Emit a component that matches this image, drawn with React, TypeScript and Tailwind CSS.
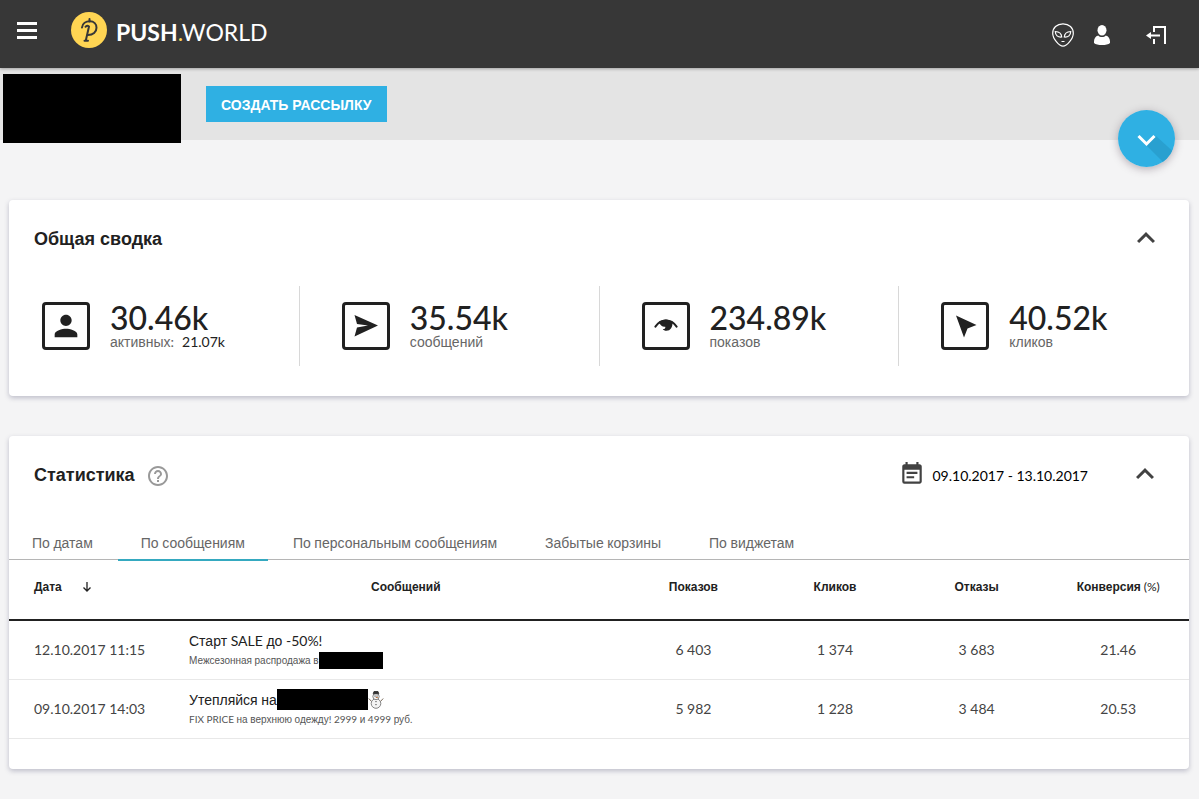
import { useState } from 'react';
import type { ReactNode } from 'react';
import { MdEventNote, MdHelpOutline, MdKeyboardArrowUp, MdPerson } from 'react-icons/md';

// Cyrillic is set in Liberation Sans, digits and latin stay in Lato
const Txt = ({ children }: { children: string }) => (
  <span>
    {children.split(/([\u0400-\u04FF]+)/).map((part, i) =>
      i % 2 ? <span key={i} className="font-['Liberation_Sans',sans-serif]">{part}</span> : part
    )}
  </span>
);

const Logo = () => (
  <a href="#" className="flex items-center gap-[9px]">
    <svg width="36" height="36" viewBox="0 0 36 36" fill="none" stroke="#373737" strokeWidth="2" strokeLinecap="round">
      <circle cx="18" cy="18" r="18" fill="#ffd553" stroke="none" />
      <path d="M18.5 7v2.5" />
      <path d="M11 15.500c.5-4 4-6.200 7.800-6.200 4.200 0 6.700 3 6.700 6.500 0 4.200-3.500 7.200-8.500 7.200" />
      <path d="M14.500 14.800c1-1.400 2.200-1.400 3.500-.3M18 14.500L14.800 28.500M13.500 28.800h3.500" />
    </svg>
    <span className="pt-1 text-[23px] leading-8 text-white">
      <span className="font-bold">PUSH</span>
      <span className="text-[#ffd553]">.</span>
      <span>WORLD</span>
    </span>
  </a>
);

const AlienIcon = () => (
  <svg width="22" height="24" viewBox="0 0 22 24" fill="none" stroke="#fff" strokeWidth="1.2">
    <path d="M11 .8C4.800.8.7 4.800.7 10.200c0 5.300 6.300 13 10.300 13s10.300-7.700 10.300-13C21.300 4.800 17.200.8 11 .8z" />
    <path d="M3.300 8.500c4 .2 6.200 2 6.400 5.500-3.900.3-6.400-1.500-6.400-5.500zM18.700 8.500c-4 .2-6.200 2-6.400 5.500 3.900.3 6.400-1.500 6.400-5.500zM9.500 18.500h3" />
  </svg>
);

const UserIcon = () => (
  <svg width="16" height="20" viewBox="0 0 16 20" fill="#fff">
    <ellipse cx="8" cy="5.300" rx="4.500" ry="5.300" />
    <path d="M4.200 10.500C5.200 11.600 6.500 12 8 12s2.800-.4 3.800-1.500C14.500 11.300 16 13.500 16 16.500V18c-1.500 1.400-4.500 2-8 2s-6.500-.6-8-2v-1.500c0-3 1.500-5.200 4.200-6z" />
  </svg>
);

const ExitIcon = () => (
  <svg width="20" height="20" viewBox="0 0 20 20" fill="none" stroke="#fff" strokeWidth="2">
    <path d="M8 7V2h11v17M8 14v5M3 10.500h11" />
    <path d="M5 7L0 10.500 5 14z" fill="#fff" stroke="none" />
  </svg>
);

const SendIcon = () => (
  <svg width="24" height="24" viewBox="0 0 24 24" fill="currentColor"><path d="M.5 1L24 11.500.5 22.500 3 13.500l11-2L3 10z" /></svg>
);

const EyeIcon = () => (
  <svg width="24" height="24" viewBox="0 0 24 24" fill="none" stroke="currentColor">
    <path d="M1.500 12.500C7 4.500 17 4.500 22.500 12.500" strokeWidth="2.200" strokeLinecap="round" />
    <path d="M5 8C8.500 4.500 15 4.500 18.500 8 18.800 13 16.500 16.800 12.500 16.800c-1.800 0-3.100-.7-3.700-1.800 1.700.2 2.800-.7 2.500-2.300C8.800 13.200 6 11.500 5 8z" fill="currentColor" stroke="none" />
  </svg>
);

const CursorIcon = () => (
  <svg width="24" height="24" viewBox="0 0 24 24" fill="currentColor"><path d="M3 1.500L23.500 11l-9 3.500-3.500 9z" /></svg>
);

const Snowman = () => (
  <svg width="16" height="18" viewBox="0 0 16 18" fill="#f4f4f4" stroke="#777" strokeWidth=".9">
    <path d="M4 11L.8 7.500M12 11l3.200-3.500" stroke="#6b5a4a" />
    <circle cx="8" cy="12.500" r="4.800" />
    <circle cx="8" cy="5.500" r="3.200" />
    <path d="M5.200 2.800L6 .5h4l.8 2.300z" fill="#333" stroke="#333" />
    <path d="M7 5h.1M9 5h.1M8 10.500v.1M8 13.500v.1" stroke="#222" strokeWidth="1.200" strokeLinecap="round" />
    <path d="M7.800 6.500h2" stroke="#c06a2c" />
  </svg>
);

const summary: { value: string; label: string; extra?: string; icon: ReactNode }[] = [
  { value: '30.46k', label: 'активных:', extra: '21.07k', icon: <MdPerson size={34} /> },
  { value: '35.54k', label: 'сообщений', icon: <SendIcon /> },
  { value: '234.89k', label: 'показов', icon: <EyeIcon /> },
  { value: '40.52k', label: 'кликов', icon: <CursorIcon /> },
];

const tabs = ['По датам', 'По сообщениям', 'По персональным сообщениям', 'Забытые корзины', 'По виджетам'];

const rows = [
  {
    date: '12.10.2017 11:15',
    title: <Txt>Старт SALE до -50%!</Txt>,
    text: <><Txt>Межсезонная распродажа в</Txt><span className="h-[17px] w-16 bg-black" /></>,
    values: ['6 403', '1 374', '3 683', '21.46'],
  },
  {
    date: '09.10.2017 14:03',
    title: <><Txt>Утепляйся на</Txt><span className="h-[21px] w-[91px] bg-black" /><Snowman /></>,
    text: <Txt>FIX PRICE на верхнюю одежду! 2999 и 4999 руб.</Txt>,
    values: ['5 982', '1 228', '3 484', '20.53'],
  },
];

const Collapse = ({ open, onClick }: { open: boolean; onClick: () => void }) => (
  <button onClick={onClick} aria-label="Свернуть" className={open ? 'text-[#424242]' : 'rotate-180 text-[#424242]'}>
    <MdKeyboardArrowUp size={36} />
  </button>
);

export default function App() {
  const [tab, setTab] = useState(1);
  const [summaryOpen, setSummaryOpen] = useState(true);
  const [statsOpen, setStatsOpen] = useState(true);

  return (
    <div className="min-h-screen bg-[#f4f4f5] pb-7 font-['Lato','Liberation_Sans',sans-serif] text-sm text-[#212121]">
      <header className="relative z-10 flex h-17 items-start justify-between bg-[#373737] pr-[33px] pl-[17px] shadow-[0_1px_3px_rgba(0,0,0,0.3)]">
        <div className="flex items-center gap-[34px] pt-3">
          <button aria-label="Меню" className="flex w-5 flex-col gap-1">
            <span className="h-[3px] bg-white" />
            <span className="h-[3px] bg-white" />
            <span className="h-[3px] bg-white" />
          </button>
          <Logo />
        </div>
        <div className="flex items-center pt-[23px]">
          <button aria-label="Поддержка"><AlienIcon /></button>
          <button aria-label="Профиль" className="ml-5"><UserIcon /></button>
          <button aria-label="Выход" className="ml-9"><ExitIcon /></button>
        </div>
      </header>

      <div className="relative flex h-18 items-start bg-[#e4e4e4] pt-1.5 pl-[3px]">
        <div className="h-[69px] w-[178px] bg-black" />
        <button className="mt-3 ml-[25px] h-9 bg-[#2fb0e3] px-[15px] pt-0.5 font-['Liberation_Sans',sans-serif] text-sm font-bold text-white">
          СОЗДАТЬ РАССЫЛКУ
        </button>
        <button aria-label="Развернуть" className="absolute right-6 -bottom-[27px] rounded-full shadow-[0_2px_8px_rgba(60,40,60,0.35)]">
          <svg width="57" height="57" viewBox="0 0 57 57" fill="none">
            <clipPath id="fab"><circle cx="28.5" cy="28.5" r="28.5" /></clipPath>
            <g clipPath="url(#fab)">
              <path d="M0 0h57v57H0z" fill="#2fb0e3" />
              <path d="M29 36l9-10 22 20-10 11z" fill="#29a0d0" />
            </g>
            <path d="M20.500 26l8 8 8-8" stroke="#fff" strokeWidth="3" />
          </svg>
        </button>
      </div>

      <main className="flex flex-col gap-10 pt-[60px] pr-2.5 pl-[9px]">
        <section className="rounded bg-white pb-[30px] shadow-[0_2px_5px_rgba(50,50,90,0.28)]">
          <div className="flex items-center justify-between pt-5 pr-[25px] pl-[25px]">
            <h2 className="pt-0.5 font-['Liberation_Sans',sans-serif] text-lg font-bold">Общая сводка</h2>
            <Collapse open={summaryOpen} onClick={() => setSummaryOpen(!summaryOpen)} />
          </div>
          {summaryOpen && (
            <div className="-mr-2.5 -ml-[9px] grid grid-cols-4 pt-[30px]">
              {summary.map((s, i) => (
                <div key={s.label} className={`flex h-20 items-center gap-5 pl-[42px] ${i < 3 ? 'border-r border-[#d8d8d8]' : ''}`}>
                  <div className="flex size-12 shrink-0 items-center justify-center rounded border-3 border-[#212121]">{s.icon}</div>
                  <div>
                    <div className="text-[32px] leading-8 font-medium">{s.value}</div>
                    <div className="leading-4 text-[#666]"><Txt>{s.label}</Txt>{s.extra && <span className="ml-2 text-[#212121]">{s.extra}</span>}</div>
                  </div>
                </div>
              ))}
            </div>
          )}
        </section>

        <section className="rounded bg-white pb-[30px] shadow-[0_2px_5px_rgba(50,50,90,0.28)]">
          <div className="flex items-center pt-5 pr-[26px] pl-[25px]">
            <h2 className="pt-0.5 font-['Liberation_Sans',sans-serif] text-lg font-bold">Статистика</h2>
            <button aria-label="Помощь" className="ml-[11px] pt-1 text-[#999]"><MdHelpOutline size={24} /></button>
            <button className="ml-auto flex items-center gap-[7px] text-black">
              <MdEventNote size={26} className="text-[#424242]" />
              <span className="pt-1">09.10.2017 - 13.10.2017</span>
            </button>
            <div className="ml-[39px] flex"><Collapse open={statsOpen} onClick={() => setStatsOpen(!statsOpen)} /></div>
          </div>

          {statsOpen && (
            <>
              <nav className="flex h-[68px] items-end gap-0.5 border-b border-[#b5b5b5]">
                {tabs.map((t, i) => (
                  <button
                    key={t}
                    onClick={() => setTab(i)}
                    className={`-mb-0.5 h-9 border-b-2 px-[23px] pt-0.5 text-[#666] ${i === tab ? 'border-[#35a9c0]' : 'border-transparent'}`}
                  >
                    <Txt>{t}</Txt>
                  </button>
                ))}
              </nav>

              <table className="w-full table-fixed border-collapse text-center">
                <thead>
                  <tr className="h-15 border-b-2 border-[#212121] text-xs">
                    <th className="w-[180px] pb-1.5 pl-[25px] text-left">
                      <span className="flex items-center gap-5">
                        <Txt>Дата</Txt>
                        <svg width="10" height="10" viewBox="0 0 10 10" fill="none" stroke="currentColor" strokeWidth="1.300"><path d="M5 0v9M1.500 5.500L5 9l3.500-3.500" /></svg>
                      </span>
                    </th>
                    <th className="pb-1.5"><Txt>Сообщений</Txt></th>
                    <th className="w-[12%] pb-1.5"><Txt>Показов</Txt></th>
                    <th className="w-[12%] pb-1.5"><Txt>Кликов</Txt></th>
                    <th className="w-[12%] pb-1.5"><Txt>Отказы</Txt></th>
                    <th className="w-[12%] pb-1.5"><Txt>Конверсия</Txt> <span className="font-normal">(%)</span></th>
                  </tr>
                </thead>
                <tbody>
                  {rows.map(r => (
                    <tr key={r.date} className="h-[59px] border-b border-[#e8e8e8] text-[#444]">
                      <td className="pl-[25px] text-left">{r.date}</td>
                      <td className="pt-0.5 text-left">
                        <div className="flex h-5 items-center text-[#212121]">{r.title}</div>
                        <div className="flex h-5 items-center text-[10px] text-[#555]">{r.text}</div>
                      </td>
                      {r.values.map(v => <td key={v}>{v}</td>)}
                    </tr>
                  ))}
                </tbody>
              </table>
            </>
          )}
        </section>
      </main>
    </div>
  );
}
